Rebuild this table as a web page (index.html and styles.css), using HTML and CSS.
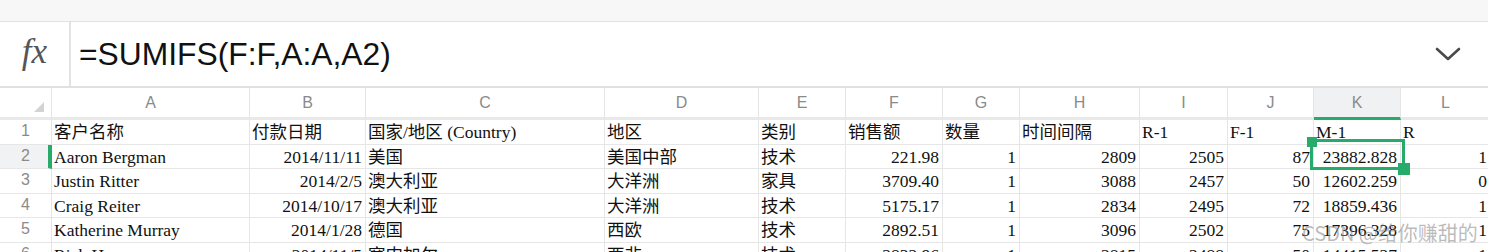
FILE: index.html
```html
<!DOCTYPE html>
<html lang="zh">
<head>
<meta charset="utf-8">
<link rel="stylesheet" href="styles.css">
</head>
<body>
<div class="page">
  <div class="topstrip"></div>
  <div class="formula">
    <div class="fx">fx</div>
    <div class="ftext">=SUMIFS(F:F,A:A,A2)</div>
    <div class="chev">
      <svg width="26" height="16" viewBox="0 0 26 16"><polyline points="2,3 13,13 24,3" fill="none" stroke="#4a4a4a" stroke-width="2.6" stroke-linecap="round" stroke-linejoin="round"/></svg>
    </div>
  </div>
  <div class="sheet">
    <div class="grid">
      <div class="ch corner"><span class="tri"></span></div>
      <div class="ch">A</div><div class="ch">B</div><div class="ch">C</div><div class="ch">D</div><div class="ch">E</div><div class="ch">F</div><div class="ch">G</div><div class="ch">H</div><div class="ch">I</div><div class="ch">J</div><div class="ch ch-sel">K</div><div class="ch">L</div>

      <div class="rh">1</div>
      <div class="c">客户名称</div><div class="c">付款日期</div><div class="c">国家/地区 (Country)</div><div class="c">地区</div><div class="c">类别</div><div class="c">销售额</div><div class="c">数量</div><div class="c">时间间隔</div><div class="c">R-1</div><div class="c">F-1</div><div class="c">M-1</div><div class="c">R</div>

      <div class="rh rh-sel">2</div>
      <div class="c">Aaron Bergman</div><div class="c n">2014/11/11</div><div class="c">美国</div><div class="c">美国中部</div><div class="c">技术</div><div class="c n">221.98</div><div class="c n">1</div><div class="c n">2809</div><div class="c n">2505</div><div class="c n">87</div><div class="c n">23882.828</div><div class="c n">1</div>

      <div class="rh">3</div>
      <div class="c">Justin Ritter</div><div class="c n">2014/2/5</div><div class="c">澳大利亚</div><div class="c">大洋洲</div><div class="c">家具</div><div class="c n">3709.40</div><div class="c n">1</div><div class="c n">3088</div><div class="c n">2457</div><div class="c n">50</div><div class="c n">12602.259</div><div class="c n">0</div>

      <div class="rh">4</div>
      <div class="c">Craig Reiter</div><div class="c n">2014/10/17</div><div class="c">澳大利亚</div><div class="c">大洋洲</div><div class="c">技术</div><div class="c n">5175.17</div><div class="c n">1</div><div class="c n">2834</div><div class="c n">2495</div><div class="c n">72</div><div class="c n">18859.436</div><div class="c n">1</div>

      <div class="rh">5</div>
      <div class="c">Katherine Murray</div><div class="c n">2014/1/28</div><div class="c">德国</div><div class="c">西欧</div><div class="c">技术</div><div class="c n">2892.51</div><div class="c n">1</div><div class="c n">3096</div><div class="c n">2502</div><div class="c n">75</div><div class="c n">17396.328</div><div class="c n">1</div>

      <div class="rh">6</div>
      <div class="c">Rick Hansen</div><div class="c n">2014/11/5</div><div class="c">塞内加尔</div><div class="c">西非</div><div class="c">技术</div><div class="c n">2832.96</div><div class="c n">1</div><div class="c n">2815</div><div class="c n">2488</div><div class="c n">50</div><div class="c n">14415.527</div><div class="c n">1</div>
    </div>
    <div class="selbox"></div>
    <div class="handle h-tl"></div>
    <div class="handle h-br"></div>
    <div class="watermark">CSDN @给你赚甜的</div>
  </div>
</div>
</body>
</html>
```

FILE: styles.css
```css
html, body {
  margin: 0;
  padding: 0;
  background: #ffffff;
}
.page {
  width: 1488px;
  height: 252px;
  overflow: hidden;
}
.topstrip {
  height: 21px;
  background: #f7f7f7;
  border-bottom: 1px solid #e2e2e2;
}
.formula {
  height: 64px;
  display: flex;
  align-items: stretch;
  border-bottom: 2px solid #e0e0e0;
  background: #ffffff;
}
.fx {
  width: 71px;
  border-right: 2px solid #e2e2e2;
  display: flex;
  align-items: center;
  justify-content: center;
  font-family: "Liberation Serif", serif;
  font-style: italic;
  font-size: 35px;
  color: #555555;
  padding-bottom: 4px;
  box-sizing: border-box;
}
.ftext {
  flex: 1;
  display: flex;
  align-items: center;
  padding-left: 8px;
  font-family: "Liberation Sans", Arial, sans-serif;
  font-size: 31.8px;
  color: #111111;
}
.chev {
  width: 80px;
  display: flex;
  align-items: center;
  justify-content: center;
}
.sheet {
  position: relative;
  height: 164px;
  overflow: hidden;
}
.grid {
  display: grid;
  grid-template-columns: 52px 198px 116px 239px 154px 87px 97px 77px 120px 88px 86px 87px 90px;
  grid-template-rows: 32px 25px 24px 25px 24px 25px 24px;
  width: 1491px;
}
.ch {
  box-sizing: border-box;
  border-right: 1px solid #e4e4e4;
  border-bottom: 3px solid #e9e9e9;
  font-family: "Liberation Sans", Arial, sans-serif;
  font-size: 16px;
  color: #8a8a8a;
  line-height: 30px;
  text-align: center;
  background: #ffffff;
}
.ch-sel {
  background: #eff1f3;
  border-bottom-color: #27ab6b;
}
.corner {
  position: relative;
}
.tri {
  position: absolute;
  right: 7px;
  bottom: 5px;
  width: 0;
  height: 0;
  border-left: 10px solid transparent;
  border-bottom: 10px solid #d3d3d3;
}
.rh {
  box-sizing: border-box;
  border-right: 1px solid #e4e4e4;
  border-bottom: 1px solid #e6e6e6;
  font-family: "Liberation Sans", Arial, sans-serif;
  font-size: 16px;
  color: #8a8a8a;
  line-height: 22px;
  text-align: center;
}
.rh-sel {
  background: #f1f2f4;
  border-right: 4px solid #27ab6b;
  padding-left: 3px;
}
.c {
  box-sizing: border-box;
  border-right: 1px solid #e6e6e6;
  border-bottom: 1px solid #e6e6e6;
  font-family: "Liberation Serif", "Noto Sans CJK SC", serif;
  font-size: 17.5px;
  color: #111111;
  line-height: 24px;
  padding: 0 2px;
  white-space: nowrap;
  overflow: hidden;
}
.n {
  text-align: right;
  padding-right: 3px;
}
.selbox {
  position: absolute;
  left: 1310px;
  top: 51px;
  width: 95px;
  height: 31px;
  box-sizing: border-box;
  border: 3px solid #27ab6b;
}
.handle {
  position: absolute;
  background: #27ab6b;
}
.h-tl {
  left: 1307px;
  top: 49px;
  width: 10px;
  height: 10px;
}
.h-br {
  left: 1398px;
  top: 75px;
  width: 12px;
  height: 12px;
}
.watermark {
  position: absolute;
  left: 1302px;
  top: 131px;
  font-family: "Noto Sans CJK SC", "Liberation Sans", sans-serif;
  font-size: 20px;
  line-height: 28px;
  color: rgba(120, 120, 120, 0.5);
  white-space: nowrap;
}
```
